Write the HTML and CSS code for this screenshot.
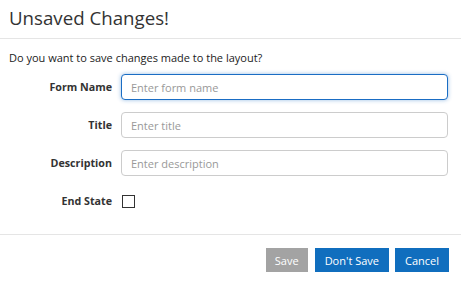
FILE: index.html
```html
<!DOCTYPE html>
<html lang="en">
<head>
    <meta charset="UTF-8">
    <title>Unsaved Changes</title>
    <link rel="stylesheet" href="styles.css">
</head>
<body>
    <div class="modal">
        <div class="modal-header">
            <h2>Unsaved Changes!</h2>
        </div>
        <div class="modal-body">
            <p>Do you want to save changes made to the layout?</p>
            <div class="form-row">
                <label for="formName">Form Name</label>
                <input type="text" id="formName" class="field focused" placeholder="Enter form name">
            </div>
            <div class="form-row">
                <label for="title">Title</label>
                <input type="text" id="title" class="field" placeholder="Enter title">
            </div>
            <div class="form-row">
                <label for="description">Description</label>
                <input type="text" id="description" class="field" placeholder="Enter description">
            </div>
            <div class="form-row check-row">
                <label for="endState">End State</label>
                <span class="checkbox" id="endState"></span>
            </div>
        </div>
        <div class="modal-footer">
            <button class="btn btn-disabled">Save</button>
            <button class="btn btn-primary">Don't Save</button>
            <button class="btn btn-primary">Cancel</button>
        </div>
    </div>
</body>
</html>
```

FILE: styles.css
```css
body {
    margin: 0;
    padding: 0;
    background: #fff;
    font-family: "Open Sans", Arial, sans-serif;
    color: #333;
}
.modal {
    width: 461px;
}
.modal-header {
    padding: 4px 9px 7px;
    border-bottom: 1px solid #e5e5e5;
}
.modal-header h2 {
    margin: 0;
    font-size: 18.7px;
    font-weight: normal;
    line-height: 27px;
}
.modal-body {
    padding: 11px 13px 20px 9px;
    border-bottom: 1px solid #e5e5e5;
}
.modal-body p {
    margin: 0 0 8px;
    font-size: 11px;
    line-height: 16px;
    color: #222;
}
.form-row {
    display: flex;
    align-items: center;
    height: 26px;
    margin-bottom: 12px;
}
.form-row.check-row {
    margin-top: 2px;
    margin-bottom: 0;
}
.form-row label {
    width: 103px;
    text-align: right;
    padding-right: 9px;
    font-size: 10.7px;
    font-weight: bold;
    color: #333;
}
.field {
    flex: 1;
    box-sizing: border-box;
    height: 26px;
    padding: 0 9px;
    border: 1px solid #ccc;
    border-radius: 4px;
    font-family: "Open Sans", Arial, sans-serif;
    font-size: 11px;
    color: #555;
    outline: none;
}
.field::placeholder {
    color: #999;
}
.field.focused {
    border-color: #1a6dc4;
    box-shadow: 0 0 4px rgba(26, 109, 196, 0.45);
}
.checkbox {
    display: block;
    width: 11px;
    height: 11px;
    margin-left: 1px;
    border: 1px solid #333;
}
.modal-footer {
    display: flex;
    justify-content: flex-end;
    gap: 6px;
    padding: 13px 12px 12px;
}
.btn {
    height: 24px;
    padding: 0 10px;
    border: 0;
    font-family: "Open Sans", Arial, sans-serif;
    font-size: 11px;
    color: #fff;
}
.btn-disabled {
    background: #a3a3a3;
    padding: 0 9px;
    margin-right: 1px;
}
.btn-primary {
    background: #106ebe;
}
```
